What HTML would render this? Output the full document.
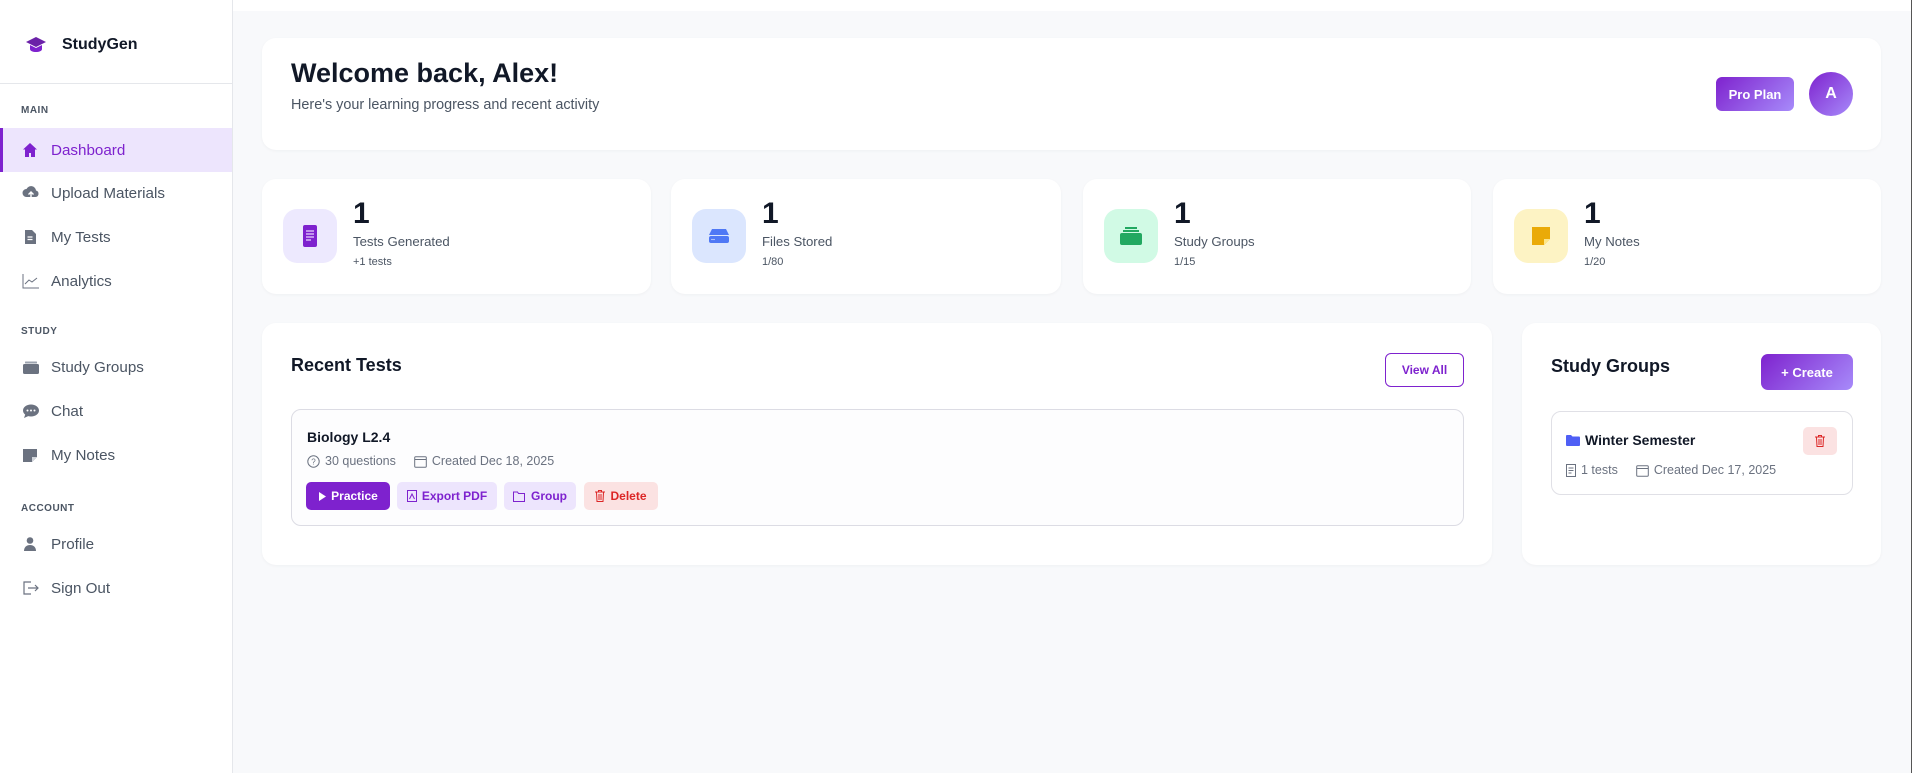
<!DOCTYPE html>
<html><head><meta charset="utf-8"><style>
*{box-sizing:border-box;margin:0;padding:0}
body{width:1914px;height:773px;overflow:hidden;background:#fff;font-family:"Liberation Sans",sans-serif;color:#111827;position:relative}
.abs{position:absolute}
.side{position:absolute;left:0;top:0;width:233px;height:773px;background:#fff;border-right:1px solid #e5e7eb}
.main{position:absolute;left:233px;top:11px;width:1678px;height:762px;background:#f8f9fb}
.edge{position:absolute;left:1911px;top:0;width:3px;height:773px;background:#fff;border-left:1px solid #555}
.card{position:absolute;background:#fff;border-radius:14px;box-shadow:0 1px 3px rgba(0,0,0,.04)}
.lbl{position:absolute;left:21px;font-size:10px;font-weight:bold;color:#4b5563;letter-spacing:.5px}
.nav{position:absolute;left:0;width:232px;height:44px;display:flex;align-items:center;font-size:15.2px;color:#4b5563}
.nav svg{position:absolute;left:22px}
.nav span{position:absolute;left:51px}
.nav.act{background:#ede5fd;color:#7e22ce;border-left:3px solid #7e22ce}
.stat .ib{position:absolute;left:21px;top:30px;width:54px;height:54px;border-radius:14px;display:flex;align-items:center;justify-content:center}
.stat .n{position:absolute;left:91px;top:18px;font-size:30px;font-weight:bold;color:#111827}
.stat .l{position:absolute;left:91px;top:55px;font-size:13.2px;color:#4b5563}
.stat .s{position:absolute;left:91px;top:77px;font-size:11px;color:#4b5563}
.btn{position:absolute;top:482px;height:28px;border-radius:5px;font-size:12px;font-weight:bold;display:flex;align-items:center;justify-content:center;gap:5px}
.meta{font-size:12.5px;color:#6b7280;display:flex;align-items:center;gap:5px}
</style></head><body>
<div class="side">
  <svg class="abs" style="left:25px;top:35px" width="22" height="20" viewBox="0 0 22 20"><path d="M11 2L1 7l10 5 10-5z" fill="#6b21a8"/><path d="M5 10v4c0 2 3 3 6 3s6-1 6-3v-4l-6 3z" fill="#7e22ce"/></svg>
  <div class="abs" style="left:62px;top:36px;font-size:16px;font-weight:bold">StudyGen</div>
  <div class="abs" style="left:0;top:83px;width:232px;height:1px;background:#e5e7eb"></div>
  <div class="lbl" style="top:105px">MAIN</div>
  <div class="nav act" style="top:128px"><svg width="16" height="16" viewBox="0 0 16 16" style="left:19px"><path d="M8 1L1 7.5h2V15h4v-4h2v4h4V7.5h2z" fill="#7e22ce"/></svg><span style="left:48px">Dashboard</span></div>
  <div class="nav" style="top:171px"><svg width="18" height="16" viewBox="0 0 18 16"><path d="M4.5 12a4 4 0 010-8 5 5 0 019.5 1.5A3.3 3.3 0 0113.5 12z" fill="#6b7280"/><path d="M9 14V7M6.5 9.5L9 7l2.5 2.5" stroke="#fff" stroke-width="1.4" fill="none"/></svg><span>Upload Materials</span></div>
  <div class="nav" style="top:215px"><svg width="16" height="16" viewBox="0 0 16 16"><path d="M3 1h7l4 4v10H3z" fill="#6b7280"/><path d="M5.5 8h5M5.5 10.5h5" stroke="#fff" stroke-width="1.2"/></svg><span>My Tests</span></div>
  <div class="nav" style="top:259px"><svg width="18" height="16" viewBox="0 0 18 16"><path d="M1 1v14h16" stroke="#6b7280" fill="none" stroke-width="1"/><path d="M3 11l4-4 3 2 5-4" stroke="#6b7280" fill="none" stroke-width="1"/></svg><span>Analytics</span></div>
  <div class="lbl" style="top:326px">STUDY</div>
  <div class="nav" style="top:345px"><svg width="18" height="16" viewBox="0 0 18 16"><rect x="1" y="5" width="16" height="10" rx="1.5" fill="#6b7280"/><rect x="3" y="2.5" width="12" height="2" rx=".5" fill="#9ca3af"/></svg><span>Study Groups</span></div>
  <div class="nav" style="top:389px"><svg width="18" height="16" viewBox="0 0 18 16"><path d="M9 1.5c4.4 0 8 2.7 8 6s-3.6 6-8 6c-1 0-2-.1-2.8-.4L2 15l1.2-3.4C1.8 10.5 1 9 1 7.5c0-3.3 3.6-6 8-6z" fill="#6b7280"/><circle cx="5.5" cy="7.5" r="1" fill="#fff"/><circle cx="9" cy="7.5" r="1" fill="#fff"/><circle cx="12.5" cy="7.5" r="1" fill="#fff"/></svg><span>Chat</span></div>
  <div class="nav" style="top:433px"><svg width="16" height="16" viewBox="0 0 16 16"><path d="M1 2h14v8l-5 5H1z" fill="#6b7280"/><path d="M10 15v-5h5" fill="#d1d5db"/></svg><span>My Notes</span></div>
  <div class="lbl" style="top:503px">ACCOUNT</div>
  <div class="nav" style="top:522px"><svg width="16" height="16" viewBox="0 0 16 16"><circle cx="8" cy="4.5" r="3.3" fill="#6b7280"/><path d="M2 15c0-4 2.7-6 6-6s6 2 6 6z" fill="#6b7280"/></svg><span>Profile</span></div>
  <div class="nav" style="top:566px"><svg width="18" height="16" viewBox="0 0 18 16"><path d="M9 2H2v12h7" stroke="#6b7280" fill="none" stroke-width="1.2"/><path d="M6 8h10M13 5l3 3-3 3" stroke="#6b7280" fill="none" stroke-width="1.2"/></svg><span>Sign Out</span></div>
</div>
<div class="main"></div>
<div class="edge"></div>

<div class="card" style="left:262px;top:38px;width:1619px;height:112px">
  <div class="abs" style="left:29px;top:20px;font-size:27px;font-weight:bold">Welcome back, Alex!</div>
  <div class="abs" style="left:29px;top:59px;font-size:14.4px;color:#4b5563">Here's your learning progress and recent activity</div>
  <div class="abs" style="left:1454px;top:39px;width:78px;height:34px;border-radius:6px;background:linear-gradient(135deg,#7e22ce,#a78bfa);color:#fff;font-size:13px;font-weight:bold;display:flex;align-items:center;justify-content:center">Pro Plan</div>
  <div class="abs" style="left:1547px;top:34px;width:44px;height:44px;border-radius:50%;background:linear-gradient(135deg,#7e22ce,#a78bfa);color:#fff;font-size:16px;font-weight:bold;display:flex;align-items:center;justify-content:center">A</div>
</div>

<div class="card stat" style="left:262px;top:179px;width:389px;height:115px"><div class="ib" style="background:#ede9fe"><svg width="14" height="22" viewBox="0 0 14 22"><rect width="14" height="22" rx="2" fill="#7e22ce"/><path d="M3 6h8M3 9h8M3 12h8M3 15h5" stroke="#e9d5ff" stroke-width="1.2"/></svg></div><div class="n">1</div><div class="l">Tests Generated</div><div class="s">+1 tests</div></div>
<div class="card stat" style="left:671px;top:179px;width:390px;height:115px"><div class="ib" style="background:#dbe6fe"><svg width="22" height="14" viewBox="0 0 22 14"><path d="M4 0h14l3 6H1z" fill="#4f78f5"/><rect x="1" y="7" width="20" height="7" rx="2" fill="#4f78f5"/><circle cx="4" cy="10.5" r=".6" fill="#fff"/><circle cx="6" cy="10.5" r=".6" fill="#fff"/></svg></div><div class="n">1</div><div class="l">Files Stored</div><div class="s">1/80</div></div>
<div class="card stat" style="left:1083px;top:179px;width:388px;height:115px"><div class="ib" style="background:#d1fae5"><svg width="22" height="18" viewBox="0 0 22 18"><rect y="6" width="22" height="12" rx="2" fill="#22a861"/><rect x="3" y="3" width="16" height="2" fill="#22a861"/><rect x="5" y="0" width="12" height="2" fill="#22a861"/></svg></div><div class="n">1</div><div class="l">Study Groups</div><div class="s">1/15</div></div>
<div class="card stat" style="left:1493px;top:179px;width:388px;height:115px"><div class="ib" style="background:#fdf3c4"><svg width="20" height="20" viewBox="0 0 20 20"><path d="M1 1h18v12l-6 6H1z" fill="#eaaa08"/><path d="M13 19v-6h6" fill="#fde68a"/></svg></div><div class="n">1</div><div class="l">My Notes</div><div class="s">1/20</div></div>

<div class="card" style="left:262px;top:323px;width:1230px;height:242px">
  <div class="abs" style="left:29px;top:32px;font-size:18px;font-weight:bold">Recent Tests</div>
  <div class="abs" style="left:1123px;top:30px;width:79px;height:34px;border:1px solid #7e22ce;border-radius:6px;color:#7e22ce;font-size:12px;font-weight:bold;display:flex;align-items:center;justify-content:center">View All</div>
  <div class="abs" style="left:29px;top:86px;width:1173px;height:117px;border:1px solid #dcdce4;border-radius:10px;background:#fdfdfe">
    <div class="abs" style="left:15px;top:19px;font-size:14px;font-weight:bold">Biology L2.4</div>
    <div class="abs meta" style="left:15px;top:44px"><svg width="13" height="13" viewBox="0 0 13 13"><circle cx="6.5" cy="6.5" r="5.7" stroke="#6b7280" fill="none"/><text x="6.5" y="9.5" font-size="8" text-anchor="middle" fill="#6b7280" font-family="Liberation Sans">?</text></svg>30 questions<span style="width:8px"></span><svg width="13" height="13" viewBox="0 0 13 13"><rect x=".7" y="1.7" width="11.6" height="10.6" rx="1" stroke="#6b7280" fill="none"/><path d="M.7 4.5h11.6" stroke="#6b7280"/></svg>Created Dec 18, 2025</div>
  </div>
</div>
<div class="btn" style="left:306px;width:84px;background:#7e22ce;color:#fff"><svg width="8" height="9" viewBox="0 0 8 9"><path d="M1 0l7 4.5L1 9z" fill="#fff"/></svg>Practice</div>
<div class="btn" style="left:397px;width:100px;background:#ede5fd;color:#7e22ce"><svg width="10" height="12" viewBox="0 0 10 12"><rect x=".5" y=".5" width="9" height="11" stroke="#7e22ce" fill="none"/><path d="M2.5 9l2.5-5 2.5 5" stroke="#7e22ce" fill="none"/></svg>Export PDF</div>
<div class="btn" style="left:504px;width:72px;background:#ede5fd;color:#7e22ce"><svg width="13" height="11" viewBox="0 0 13 11"><path d="M.5 1h4l1 1.5h6v8H.5z" stroke="#7e22ce" fill="none"/></svg>Group</div>
<div class="btn" style="left:584px;width:74px;background:#fbe2e2;color:#dc2626"><svg width="10" height="12" viewBox="0 0 10 12"><path d="M0 2h10M3.5 2V.5h3V2M1.5 2.5l.5 9h6l.5-9M4 4v6M6 4v6" stroke="#dc2626" fill="none"/></svg>Delete</div>

<div class="card" style="left:1522px;top:323px;width:359px;height:242px">
  <div class="abs" style="left:29px;top:33px;font-size:18px;font-weight:bold">Study Groups</div>
  <div class="abs" style="left:239px;top:31px;width:92px;height:36px;border-radius:7px;background:linear-gradient(135deg,#7e22ce,#a78bfa);color:#fff;font-size:13px;font-weight:bold;display:flex;align-items:center;justify-content:center">+ Create</div>
  <div class="abs" style="left:29px;top:88px;width:302px;height:84px;border:1px solid #e0e0e6;border-radius:10px">
    <div class="abs" style="left:14px;top:20px;font-size:14px;font-weight:bold;display:flex;align-items:center;gap:5px"><svg width="14" height="11" viewBox="0 0 14 11"><path d="M0 1a1 1 0 011-1h4l1.5 1.5H13a1 1 0 011 1V10a1 1 0 01-1 1H1a1 1 0 01-1-1z" fill="#4f5ff5"/></svg>Winter Semester</div>
    <div class="abs" style="left:251px;top:15px;width:34px;height:28px;border-radius:5px;background:#fbe2e2;display:flex;align-items:center;justify-content:center"><svg width="10" height="12" viewBox="0 0 10 12"><path d="M0 2h10M3.5 2V.5h3V2M1.5 2.5l.5 9h6l.5-9M4 4v6M6 4v6" stroke="#dc2626" fill="none"/></svg></div>
    <div class="abs meta" style="left:14px;top:51px"><svg width="10" height="13" viewBox="0 0 10 13"><rect x=".5" y=".5" width="9" height="12" stroke="#6b7280" fill="none"/><path d="M2.5 4h5M2.5 6.5h5M2.5 9h3" stroke="#6b7280"/></svg>1 tests<span style="width:8px"></span><svg width="13" height="13" viewBox="0 0 13 13"><rect x=".7" y="1.7" width="11.6" height="10.6" rx="1" stroke="#6b7280" fill="none"/><path d="M.7 4.5h11.6" stroke="#6b7280"/></svg>Created Dec 17, 2025</div>
  </div>
</div>
</body></html>
